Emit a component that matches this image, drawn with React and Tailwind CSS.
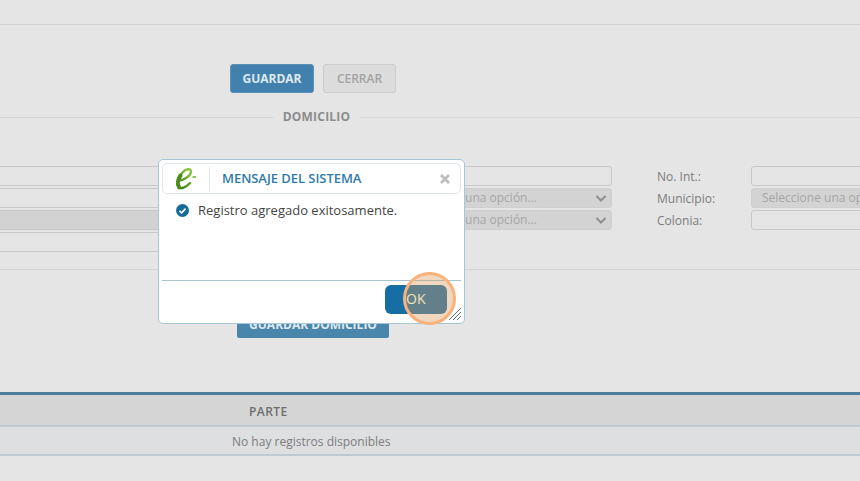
export default function App() {
  const field = "h-[20px] border border-[#c9c9c9] rounded-[3px] bg-[#e5e5e5] shrink-0";
  const select = "h-[20px] border border-[#cfcfcf] rounded-[3px] bg-[#d3d3d3] shrink-0 flex items-center justify-between pl-[8px] pr-[3px] text-[12px] text-[#a6a6a6] whitespace-nowrap overflow-hidden";
  const Chevron = () => (
    <svg width="14" height="14" viewBox="0 0 14 14" className="shrink-0" fill="none" stroke="#8f8f8f" strokeWidth="2">
      <path d="M2.5 5 L7 9.5 L11.5 5" />
    </svg>
  );
  return (
    <div className="relative w-[860px] h-[481px] overflow-hidden bg-[#e5e5e5] font-['Open_Sans',sans-serif]">
      <div className="h-[25px] border-b border-[#d3d3d3]" />
      <div className="flex gap-[9px] pl-[230px] pt-[39px]">
        <div className="w-[84px] h-[29px] rounded-[3px] bg-[#4281ad] border border-[#5b93b8] flex items-center justify-center text-[12px] font-bold text-[#dfe9f0]">GUARDAR</div>
        <div className="w-[73px] h-[29px] rounded-[3px] bg-[#dcdcdc] border border-[#cccccc] flex items-center justify-center text-[12px] font-semibold text-[#a3a3a3]">CERRAR</div>
      </div>
      <div className="flex items-center h-[20px] mt-[14px]">
        <div className="w-[273px] border-t border-[#d3d3d3]" />
        <div className="w-[87px] text-center text-[12px] font-bold text-[#8c8c8c] tracking-[0.2px]">DOMICILIO</div>
        <div className="grow border-t border-[#d9d9d9]" />
      </div>
      <div className="flex mt-[39px] pb-[17px] border-b border-[#d3d3d3]">
        <div className="w-[340px] flex flex-col gap-[2px] shrink-0">
          <div className="h-[20px] border-y border-[#c9c9c9]" />
          <div className="h-[20px] border-y border-[#c9c9c9]" />
          <div className="h-[20px] border-y border-[#c6c6c6] bg-[#d2d2d2]" />
          <div className="h-[20px] border-y border-[#c9c9c9]" />
        </div>
        <div className="w-[218px] ml-[54px] flex flex-col gap-[2px] shrink-0">
          <div className={field} />
          <div className={select}><span>Seleccione una opción...</span><Chevron /></div>
          <div className={select}><span>Seleccione una opción...</span><Chevron /></div>
        </div>
        <div className="w-[94px] ml-[45px] flex flex-col gap-[2px] text-[12px] text-[#7c7c7c] shrink-0">
          <div className="h-[20px] leading-[22px]">No. Int.:</div>
          <div className="h-[20px] leading-[22px]">Municipio:</div>
          <div className="h-[20px] leading-[22px]">Colonia:</div>
        </div>
        <div className="w-[140px] flex flex-col gap-[2px] shrink-0">
          <div className={field} />
          <div className={select + " !pl-[10px]"}>Seleccione una opción...</div>
          <div className={field} />
        </div>
      </div>
      <div className="ml-[237px] mt-[41px] w-[152px] h-[27px] rounded-[2px] bg-[#4a85ac] flex items-center justify-center text-[12px] font-bold text-[#dfe9f0]">GUARDAR DOMICILIO</div>
      <div className="mt-[54px] border-t-[3px] border-[#4d7f9c]">
        <div className="h-[32px] bg-[#d5d5d5] border-b-[2px] border-[#c0cad3] flex items-center pt-[3px] pl-[249px] text-[12px] font-semibold text-[#6e6e6e] tracking-[0.45px]">PARTE</div>
        <div className="h-[29px] bg-[#dddfe0] border-b-[2px] border-[#bdc9d3] flex items-center pt-[2px] pl-[232px] text-[12px] text-[#7d7d7d]">No hay registros disponibles</div>
      </div>

      <div className="absolute left-[158px] top-[159px] w-[307px] h-[165px] rounded-[5px] border border-[#a5c8d6] bg-white p-[3px]">
        <div className="flex items-center h-[31px] border border-[#dfe6ea] rounded-[5px]">
          <div className="w-[47px] h-[24px] border-r border-[#e2e6e8] flex items-center pl-[11px]">
            <svg width="24" height="24" viewBox="0 0 24 24" fill="none">
              <defs>
                <linearGradient id="eGreen" x1="0.7" y1="0" x2="0.2" y2="1">
                  <stop offset="0" stopColor="#8cc63f" />
                  <stop offset="1" stopColor="#3f7f16" />
                </linearGradient>
              </defs>
              <path d="M5 13.5 C10 13 17 9 17 4.5 C17 1 11.5 1.5 8 6 C4 10.5 2.5 17 4.5 20 C6.5 22.5 12 20.5 16 16" stroke="url(#eGreen)" strokeWidth="2.4" strokeLinecap="round" />
              <path d="M6.5 8.5 C4 12 3 17 5.2 20.3" stroke="#4b8a1c" strokeWidth="4" strokeLinecap="round" />
              <path d="M18.5 10 H22" stroke="#7cb53a" strokeWidth="1.6" />
            </svg>
          </div>
          <div className="ml-[12px] text-[13px] font-semibold text-[#2f7ba8] tracking-[-0.05px]">MENSAJE DEL SISTEMA</div>
          <svg className="ml-auto mr-[10px]" width="10" height="10" viewBox="0 0 10 10" stroke="#bdbdbd" strokeWidth="2.8">
            <path d="M1 1 L9 9 M9 1 L1 9" />
          </svg>
        </div>
        <div className="flex items-center mt-[8px] pl-[14px] h-[16px]">
          <svg width="13" height="13" viewBox="0 0 13 13" fill="none">
            <circle cx="6.5" cy="6.5" r="6.5" fill="#156b99" />
            <path d="M3.5 6.8 L5.6 8.8 L9.6 4.6" stroke="#ffffff" strokeWidth="1.6" />
          </svg>
          <span className="ml-[9px] pt-[1px] text-[13px] text-[#444444]">Registro agregado exitosamente.</span>
        </div>
        <div className="mt-[62px] border-t border-[#a9c4cf]" />
        <div className="flex justify-end pr-[14px] pt-[4px]">
          <div className="w-[62px] h-[29px] rounded-[6px] bg-[#176ea5]" />
        </div>
        <svg className="absolute right-[3px] bottom-[3px]" width="12" height="12" viewBox="0 0 12 12" stroke="#5f747d" strokeWidth="1">
          <path d="M0 12 L12 0 M4 12 L12 4 M8 12 L12 8" />
        </svg>
      </div>

      <div className="absolute left-[403px] top-[272px] w-[53px] h-[53px] rounded-full border-[3px] border-[#f9b27a] bg-[#d69a62]/40 flex items-center">
        <span className="text-[14px] text-[#f0e4b8]">OK</span>
      </div>
    </div>
  );
}
